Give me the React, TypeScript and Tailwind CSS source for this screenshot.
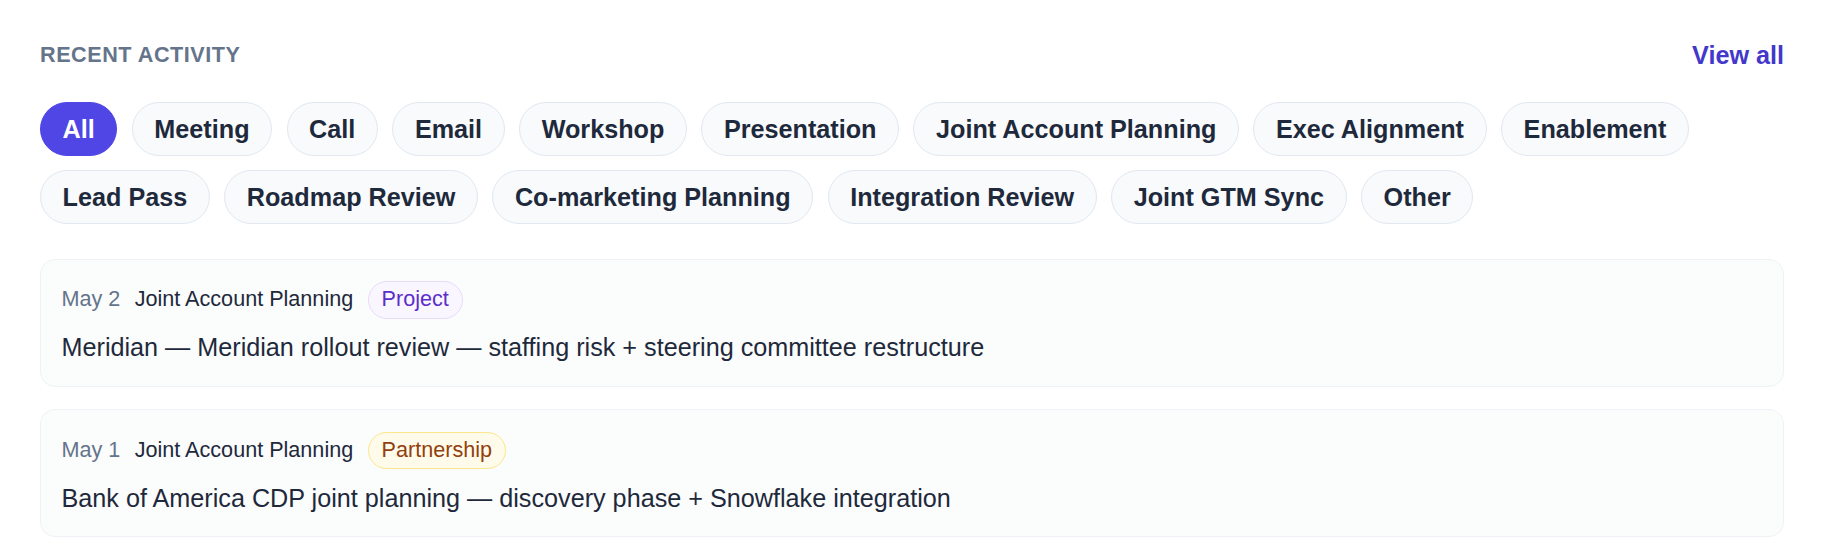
const filters = [
  "All",
  "Meeting",
  "Call",
  "Email",
  "Workshop",
  "Presentation",
  "Joint Account Planning",
  "Exec Alignment",
  "Enablement",
  "Lead Pass",
  "Roadmap Review",
  "Co-marketing Planning",
  "Integration Review",
  "Joint GTM Sync",
  "Other",
];

type Activity = {
  date: string;
  type: string;
  tag: string;
  tone: "project" | "partnership";
  title: string;
};

const activities: Activity[] = [
  {
    date: "May 2",
    type: "Joint Account Planning",
    tag: "Project",
    tone: "project",
    title: "Meridian — Meridian rollout review — staffing risk + steering committee restructure",
  },
  {
    date: "May 1",
    type: "Joint Account Planning",
    tag: "Partnership",
    tone: "partnership",
    title: "Bank of America CDP joint planning — discovery phase + Snowflake integration",
  },
];

function FilterChip({ label, active }: { label: string; active?: boolean }) {
  return (
    <button
      className={`rounded-full border px-[21.6px] py-[7.8px] text-[25.2px] leading-[36px] font-bold ${
        active
          ? "border-[#4f46e5] bg-[#4f46e5] text-white"
          : "border-[#e2e8f0] bg-[#f8fafc] text-[#1e293b]"
      }`}
    >
      {label}
    </button>
  );
}

function TagPill({ label, tone }: { label: string; tone: Activity["tone"] }) {
  const styles =
    tone === "project"
      ? "border-[#e6dcf7] bg-[#faf6ff] text-[#5b2fc9]"
      : "border-[#fde68a] bg-[#fffbeb] text-[#92400e]";
  return (
    <span className={`rounded-full border px-[13px] py-[3.4px] text-[21.6px] leading-[28.8px] ${styles}`}>
      {label}
    </span>
  );
}

function ActivityCard({ item }: { item: Activity }) {
  return (
    <div className="rounded-[15px] border border-[#eef2f6] bg-[#fbfcfc] px-[20.5px] pt-[21.5px] pb-[20.5px]">
      <div className="flex items-center gap-[14.4px] text-[21.6px] leading-[28.8px]">
        <span className="text-[#64748b]">{item.date}</span>
        <span className="text-[#1e293b]">{item.type}</span>
        <TagPill label={item.tag} tone={item.tone} />
      </div>
      <p className="mt-[10.5px] text-[25.2px] leading-[36px] text-[#1e293b]">{item.title}</p>
    </div>
  );
}

export default function App() {
  return (
    <div
      className="min-h-screen bg-white px-[40px] pt-[37px]"
      style={{ fontFamily: '"Liberation Sans", Arial, Helvetica, sans-serif' }}
    >
      <div className="flex items-center justify-between">
        <h2 className="text-[21.6px] leading-[36px] font-bold tracking-[0.025em] text-[#64748b] uppercase">
          Recent Activity
        </h2>
        <a className="text-[25.2px] leading-[36px] font-bold text-[#4338ca]" href="#">
          View all
        </a>
      </div>

      <div className="mt-[29px] flex flex-wrap gap-[14.4px]">
        {filters.map((f) => (
          <FilterChip key={f} label={f} active={f === "All"} />
        ))}
      </div>

      <div className="mt-[35px] flex flex-col gap-[22.5px]">
        {activities.map((a) => (
          <ActivityCard key={a.date} item={a} />
        ))}
      </div>
    </div>
  );
}
